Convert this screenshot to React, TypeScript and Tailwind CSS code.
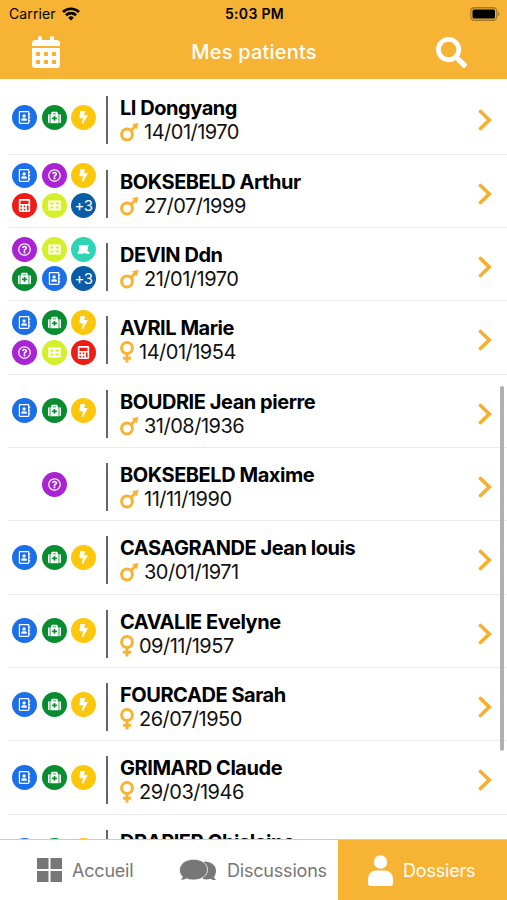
import { FaBolt, FaCalculator, FaMedkit, FaRegAddressBook, FaRegQuestionCircle, FaSearch } from "react-icons/fa";
import type { ReactNode } from "react";

type Badge = "book" | "kit" | "bolt" | "help" | "calc" | "table" | "map" | "more";

type Patient = {
  name: string;
  birth: string;
  gender: "m" | "f";
  badges: Badge[];
};

const basic: Badge[] = ["book", "kit", "bolt"];

const patients: Patient[] = [
  { name: "LI Dongyang", birth: "14/01/1970", gender: "m", badges: basic },
  { name: "BOKSEBELD Arthur", birth: "27/07/1999", gender: "m", badges: ["book", "help", "bolt", "calc", "table", "more"] },
  { name: "DEVIN Ddn", birth: "21/01/1970", gender: "m", badges: ["help", "table", "map", "kit", "book", "more"] },
  { name: "AVRIL Marie", birth: "14/01/1954", gender: "f", badges: ["book", "kit", "bolt", "help", "table", "calc"] },
  { name: "BOUDRIE Jean pierre", birth: "31/08/1936", gender: "m", badges: basic },
  { name: "BOKSEBELD Maxime", birth: "11/11/1990", gender: "m", badges: ["help"] },
  { name: "CASAGRANDE Jean louis", birth: "30/01/1971", gender: "m", badges: basic },
  { name: "CAVALIE Evelyne", birth: "09/11/1957", gender: "f", badges: basic },
  { name: "FOURCADE Sarah", birth: "26/07/1950", gender: "f", badges: basic },
  { name: "GRIMARD Claude", birth: "29/03/1946", gender: "f", badges: basic },
  { name: "DRAPIER Ghislaine", birth: "", gender: "f", badges: basic },
];

function CalendarIcon() {
  return (
    <svg viewBox="0 0 28 32" className="h-8 w-7" fill="currentColor">
      <path d="M6 4V2a2 2 0 0 1 4 0v2h8V2a2 2 0 0 1 4 0v2h2.500A3.500 3.500 0 0 1 28 7.500V10H0V7.500A3.500 3.500 0 0 1 3.500 4Z" />
      <path fillRule="evenodd" d="M0 12h28v16.500a3.500 3.500 0 0 1-3.500 3.500h-21A3.500 3.500 0 0 1 0 28.500ZM4 16v4h4v-4Zm8 0v4h4v-4Zm8 0v4h4v-4ZM4 24v4h4v-4Zm8 0v4h4v-4Zm8 0v4h4v-4Z" />
    </svg>
  );
}

function TableIcon() {
  return (
    <svg viewBox="0 0 14 12" className="h-[11px] w-[13px]" fill="currentColor">
      <path fillRule="evenodd" d="M1 .5h12a.8.8 0 0 1 .8.8v9.400a.8.8 0 0 1-.8.8H1a.8.8 0 0 1-.8-.8V1.300A.8.8 0 0 1 1 .5ZM2.300 2.600v2.300H6V2.600Zm5.700 0v2.300h3.700V2.600ZM2.300 7v2.300H6V7ZM8 7v2.300h3.700V7Z" />
    </svg>
  );
}

function MapIcon() {
  return (
    <svg viewBox="0 0 14 12" className="h-[11px] w-[13px]" fill="currentColor">
      <path d="M2.500 1h4l1 1L9 1h4l-1.300 2 .3 2-1 2 2.500 2v1.500H9.500L8 9.500l-1.500 1H.3l1.500-3Z" />
    </svg>
  );
}

const badgeStyles: Record<Badge, { color: string; icon: ReactNode }> = {
  book: { color: "bg-[#1b6fe8]", icon: <FaRegAddressBook size={13} /> },
  kit: { color: "bg-[#078c2f]", icon: <FaMedkit size={13} /> },
  bolt: { color: "bg-[#fdc70c]", icon: <FaBolt size={13} /> },
  help: { color: "bg-[#a922d3]", icon: <FaRegQuestionCircle size={13} /> },
  calc: { color: "bg-[#ee1c17]", icon: <FaCalculator size={13} /> },
  table: { color: "bg-[#d5f02a]", icon: <TableIcon /> },
  map: { color: "bg-[#2fd3b5]", icon: <MapIcon /> },
  more: { color: "bg-[#0a5ca6]", icon: <span className="text-[15px] leading-none tracking-[-0.5px]">+3</span> },
};

function GenderIcon({ gender }: { gender: "m" | "f" }) {
  if (gender === "m") {
    return (
      <svg viewBox="0 0 19 20" className="h-5 w-[19px] shrink-0 text-[#f8b333]" fill="none" stroke="currentColor" strokeWidth="3">
        <circle cx="7" cy="12.500" r="5.400" />
        <path d="m11 8.500 4.500-4.500" />
        <path d="m12 2.200 6.500-1.500L17 7.200Z" fill="currentColor" stroke="none" />
      </svg>
    );
  }
  return (
    <svg viewBox="0 0 14 22" className="h-[22px] w-3.5 shrink-0 text-[#f8b333]" fill="none" stroke="currentColor" strokeWidth="3">
      <circle cx="7" cy="7" r="5.400" />
      <path d="M7 12.500V21.500M3 17.300h8" />
    </svg>
  );
}

function PatientRow({ patient }: { patient: Patient }) {
  return (
    <li className="ml-2 flex h-[73.35px] shrink-0 border-b border-[#ececec]">
      <div className="flex w-[98px] shrink-0 flex-wrap content-center justify-center gap-[4.500px] pr-1.5">
        {patient.badges.map((badge) => (
          <span key={badge} className={`flex size-[25px] items-center justify-center rounded-full text-white ${badgeStyles[badge].color}`}>
            {badgeStyles[badge].icon}
          </span>
        ))}
      </div>
      <div className="mt-[15px] h-12 w-0.5 shrink-0 bg-[#666]" />
      <div className="ml-3 flex-1 pt-[15px]">
        <p className="h-6 text-[20px] leading-6 font-bold tracking-[-0.45px] whitespace-nowrap text-black">{patient.name}</p>
        {patient.birth && (
          <div className="flex h-6 items-center">
            <GenderIcon gender={patient.gender} />
            <span className="ml-[5px] text-[20px] leading-6 tracking-[-0.5px] text-[#111]">{patient.birth}</span>
          </div>
        )}
      </div>
      <svg viewBox="0 0 14 22" className="mt-7 mr-[15px] h-[22px] w-3.5 shrink-0 text-[#f6b02f]" fill="none" stroke="currentColor" strokeWidth="3.700" strokeLinecap="round">
        <path d="m2.500 2.500 8.800 8.500-8.800 8.500" />
      </svg>
    </li>
  );
}

export default function App() {
  return (
    <div className="relative flex h-[900px] w-[507px] flex-col overflow-hidden bg-white font-['Inter',sans-serif]">
      <header className="h-[79px] shrink-0 bg-[#f7b334]">
        <div className="flex h-[27px] items-center justify-between pr-[7px] pl-[9px] text-[14px] text-black">
          <div className="flex w-40 items-center gap-1.5">
            <span className="tracking-[0.1px]">Carrier</span>
            <svg viewBox="0 0 18 14" className="h-3.5 w-[18px]" fill="none" stroke="currentColor" strokeWidth="2.700">
              <path d="M1 5a11.500 11.500 0 0 1 16 0M4 8.200a7.200 7.200 0 0 1 10 0" />
              <path d="M9 13.500 6.200 10.700a4 4 0 0 1 5.600 0Z" fill="currentColor" stroke="none" />
            </svg>
          </div>
          <span className="font-semibold tracking-[0.3px]">5:03 PM</span>
          <div className="flex w-40 justify-end">
            <svg viewBox="0 0 30 14" className="h-3.5 w-[30px]">
              <rect x=".75" y=".75" width="26" height="12.500" rx="3.500" fill="none" stroke="#a47a2a" strokeWidth="1.300" />
              <rect x="2.500" y="2.500" width="22.500" height="9" rx="1.500" />
              <path d="M28 4.500c2 1 2 4 0 5Z" fill="#a47a2a" />
            </svg>
          </div>
        </div>
        <div className="flex h-[50px] items-center px-8 text-white">
          <CalendarIcon />
          <h1 className="flex-1 pl-3 text-center text-[20px] font-medium tracking-[0.2px]">Mes patients</h1>
          <FaSearch size={31} className="mr-2" />
        </div>
      </header>

      <ul className="flex h-[760px] shrink-0 flex-col overflow-hidden pt-[2.200px]">
        {patients.map((patient) => (
          <PatientRow key={patient.name} patient={patient} />
        ))}
      </ul>
      <div className="absolute top-[386px] right-[3px] h-[365px] w-1 rounded-full bg-[#b1b1b1]" />

      <nav className="flex h-[61px] shrink-0 border-t border-[#ccc] bg-white text-[18px] tracking-[-0.2px] text-[#777]">
        <div className="flex w-[169px] items-center pl-[37px]">
          <svg viewBox="0 0 25 24" className="h-6 w-[25px]" fill="currentColor">
            <path d="M0 0h11.500v11H0ZM13.500 0H25v11H13.500ZM0 13h11.500v11H0ZM13.500 13H25v11H13.500Z" />
          </svg>
          <span className="ml-2.5">Accueil</span>
        </div>
        <div className="flex w-[169px] items-center pl-2.5">
          <svg viewBox="0 0 38 22" className="h-[22px] w-[38px] shrink-0" fill="currentColor">
            <path d="M25 2.500c7.500 0 12 4 12 9 0 3-.8 5-2 6.500.2 1.200 1 2.200 2.300 3-2.500.2-4.600-.2-5.800-1.200-2 .7-5 .9-8 0Z" />
            <path d="M14.500.3C22.500.3 28.500 4.500 28.500 10.600S22.500 21 14.500 21c-2.500 0-5-.4-7-1.300-1.500 1-3.500 1.600-6.500 1.300 1.500-.9 2.200-2 2.200-3.400C1.400 15.800.5 13.500.5 11 .5 5 6.500.3 14.500.3Z" stroke="#fff" strokeWidth=".8" />
          </svg>
          <span className="ml-2.5">Discussions</span>
        </div>
        <div className="flex flex-1 items-center bg-[#f7b334] pl-[30px] text-white">
          <svg viewBox="0 0 25 31" className="h-[31px] w-[25px]" fill="currentColor">
            <circle cx="12.500" cy="7" r="6.700" />
            <path d="M8 15.500h9c5 0 8 4 8 9v4c0 1.500-1 2.500-2.500 2.500h-20C1 31 0 30 0 28.500v-4c0-5 3-9 8-9Z" />
          </svg>
          <span className="ml-2.5">Dossiers</span>
        </div>
      </nav>
    </div>
  );
}
